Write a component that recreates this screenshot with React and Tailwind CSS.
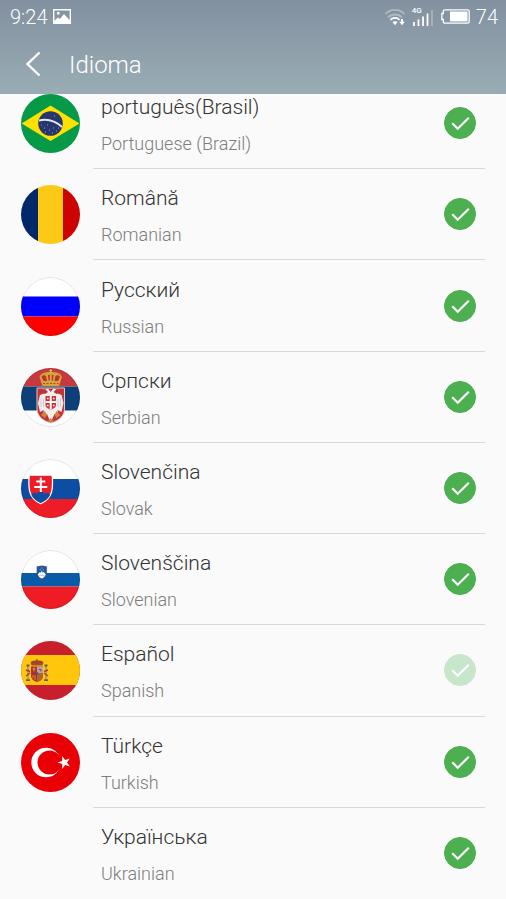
import { useState } from 'react'

const LANGUAGES = [
  { id: 'pt-BR', name: 'português(Brasil)', english: 'Portuguese (Brazil)', Flag: BrazilFlag },
  { id: 'ro', name: 'Română', english: 'Romanian', Flag: RomaniaFlag },
  { id: 'ru', name: 'Русский', english: 'Russian', Flag: RussiaFlag },
  { id: 'sr', name: 'Српски', english: 'Serbian', Flag: SerbiaFlag },
  { id: 'sk', name: 'Slovenčina', english: 'Slovak', Flag: SlovakiaFlag },
  { id: 'sl', name: 'Slovenščina', english: 'Slovenian', Flag: SloveniaFlag },
  { id: 'es', name: 'Español', english: 'Spanish', Flag: SpainFlag, locked: true },
  { id: 'tr', name: 'Türkçe', english: 'Turkish', Flag: TurkeyFlag },
  { id: 'uk', name: 'Українська', english: 'Ukrainian' },
]

function Roundel({ outlined, children }) {
  return (
    <svg viewBox="0 0 59 59" className="size-full rounded-full" aria-hidden="true">
      {children}
      {outlined && <circle cx="29.5" cy="29.5" r="29" fill="none" stroke="#000" strokeOpacity="0.12" />}
    </svg>
  )
}

function BrazilFlag() {
  return (
    <Roundel>
      <rect width="59" height="59" fill="#069a48" />
      <path d="M.7 29.5 29.5 11.5 58.5 29.5 29.5 47Z" fill="#fee100" />
      <circle cx="29.5" cy="29.5" r="12.3" fill="#28366f" />
      <path d="M18 26.4Q31 23.5 41 33" fill="none" stroke="#dcebea" strokeWidth="2" />
      <path d="M20 31h1M23 34h1M26 31h1M28 36h1M32 34h1M35 37h1M24 38h1M31 39h1M37 34h1M33 22h1" stroke="#8e9bc4" strokeWidth="1" />
    </Roundel>
  )
}

function RomaniaFlag() {
  return (
    <Roundel>
      <rect width="17" height="59" fill="#00286b" />
      <rect x="17" width="25" height="59" fill="#fcca16" />
      <rect x="42" width="17" height="59" fill="#cd0303" />
    </Roundel>
  )
}

function RussiaFlag() {
  return (
    <Roundel outlined>
      <rect width="59" height="20" fill="#fff" />
      <rect y="19.5" width="59" height="20" fill="#00f" />
      <rect y="39.5" width="59" height="20" fill="#f00" />
    </Roundel>
  )
}

function SerbiaFlag() {
  return (
    <Roundel outlined>
      <rect width="59" height="59" fill="#fff" />
      <rect width="59" height="18.5" fill="#c6393e" />
      <rect y="18.5" width="59" height="24" fill="#0c4076" />
      {/* shield */}
      <path d="M16 20h27.500v21c0 7-6 12-13.700 14C22 53 16 48 16 41Z" fill="#c5323a" stroke="#e5c8c8" strokeWidth="1" />
      {/* eagle */}
      <path d="M29.700 24 27 20.500l-5 1.500 2 3-5 2-2 8 2 9 4-2-1 5 4-1 3 7h1.500l3-7 4 1-1-5 4 2 2-9-2-8-5-2 2-3-5-1.500Z" fill="#f3eeee" />
      <path d="M20 24l4-3 3 3-3 2ZM39.500 24l-4-3-3 3 3 2Z" fill="#b8362d" />
      <path d="M20 30v9M22.500 31v8M37 31v8M39.500 30v9" stroke="#cbbfc4" strokeWidth="0.800" />
      <path d="M24.500 28h10.500v9c0 2-2 3.500-5.200 4.500-3.300-1-5.300-2.500-5.300-4.500Z" fill="#cf3239" />
      <path d="M29.700 28v13M24.500 34h10.500" stroke="#fff" strokeWidth="2" />
      <path d="M26 30.500h1.500M32 30.500h1.500M26 37.500h1.500M32 37.500h1.500" stroke="#fff" strokeWidth="1.500" />
      <path d="M20 47l4-4 2 4-2 3ZM39.500 47l-4-4-2 4 2 3ZM27 53l2.700-3 2.700 3-2.700 1.500Z" fill="#c98a3c" />
      {/* crown */}
      <path d="M21.500 18 18.500 9c1-4 6-5 11.200-5s10.200 1 11.200 5L38 18Z" fill="#d8a23a" />
      <path d="M22.500 13 20.500 9c1-2 3-2 4.500-1l1 5ZM27.500 12.500 27 7h1.800v5.500ZM30.800 12.500V7h1.800l-.6 5.500ZM33.500 13l1-5c1.500-1 3.500-1 4.500 1l-2 4Z" fill="#b5362f" />
      <path d="M22 15.500h15.500" stroke="#a7482e" strokeWidth="1.200" strokeDasharray="2 1.500" />
      <path d="M29.700 1v4M28.200 2.500h3" stroke="#e6bd5a" strokeWidth="1.200" />
    </Roundel>
  )
}

function SlovakiaFlag() {
  return (
    <Roundel outlined>
      <rect width="59" height="20" fill="#fff" />
      <rect y="20" width="59" height="20" fill="#0d4da2" />
      <rect y="40" width="59" height="19" fill="#ed1c27" />
      <path d="M8.200 16.200h23c.6 7 .6 12-.7 17-1.600 5.800-5.500 9.300-10.800 11.500-5.300-2.200-9.200-5.700-10.800-11.500-1.300-5-1.300-10-.7-17Z" fill="#ed1c27" stroke="#fff" strokeWidth="1.300" />
      <path d="M10.500 36c1-2.500 4-3 5.200-1 .8-3.500 7.200-3.500 8 0 1.300-2 4.300-1.500 5.300 1-2 4-5 6.300-9.300 8-4.200-1.700-7.200-4-9.200-8Z" fill="#0d4da2" />
      <path d="M19.800 18.500v14.500M15.300 22.500h9M13.300 28h13" stroke="#fff" strokeWidth="2" />
    </Roundel>
  )
}

function SloveniaFlag() {
  return (
    <Roundel outlined>
      <rect width="59" height="23" fill="#fff" />
      <rect y="23" width="59" height="13.500" fill="#095ba8" />
      <rect y="36.500" width="59" height="23" fill="#ee1c25" />
      <path d="M15.800 16.500q5-1.600 10 0v6c0 3.500-2 5.600-5 7-3-1.400-5-3.500-5-7Z" fill="#1a5a9e" stroke="#c5404c" strokeWidth="0.300" />
      <path d="M16.800 24.500l2-2.500 1 .8 1-2.300 1 2.300 1-.8 2 2.500c-.8 2-2 3-4 4-2-1-3.200-2-4-4Z" fill="#fff" />
      <path d="M18.300 25.500q1.200-.8 2.500 0t2.500 0" fill="none" stroke="#1a5a9e" strokeWidth="0.400" />
      <path d="M20.300 18h1M18.800 19.800h1M21.800 19.800h1" stroke="#e7d264" strokeWidth="0.800" />
    </Roundel>
  )
}

function SpainFlag() {
  return (
    <Roundel>
      <rect width="59" height="59" fill="#c7202c" />
      <rect y="14" width="59" height="30" fill="#ffc60b" />
      {/* pillars */}
      <path d="M7 25v13M25 25v13" stroke="#a99a7a" strokeWidth="1.800" />
      <path d="M5.500 24.500h3M23.500 24.500h3M5 39.200h4M23 39.200h4" stroke="#755b43" strokeWidth="1.800" />
      <path d="M5 29l4 1.500M5 35l4-3M23 30.500l4-1.500M23 32l4 3" stroke="#b33a2b" strokeWidth="1.500" />
      {/* crown */}
      <path d="M10.500 24.500 9.500 21.500c1-2 4-2 6.500-2s5.500 0 6.500 2l-1 3Z" fill="#a8482f" />
      <path d="M16 18v5M12 21.500h1.500M18.500 21.500H20" stroke="#704035" strokeWidth="1" />
      {/* shield */}
      <path d="M10 25.500h12v9c0 3.500-2.500 5.500-6 6.500-3.500-1-6-3-6-6.500Z" fill="#ae3029" />
      <path d="M16 25.500h6v7h-6Z" fill="#b8a1af" />
      <path d="M16 32.500h6v2.500c0 3-2.500 5-6 6Z" fill="#b06428" />
      <path d="M11.500 28h3M13 26.500v4" stroke="#d89b43" strokeWidth="1" />
      <path d="M18 28.500h2v2" fill="none" stroke="#873b60" strokeWidth="1" />
      <path d="M12 34v3.500M14 34v5" stroke="#d89b43" strokeWidth="0.800" />
      <circle cx="16" cy="32.500" r="1.500" fill="#5a4a77" />
    </Roundel>
  )
}

function TurkeyFlag() {
  return (
    <Roundel>
      <rect width="59" height="59" fill="#e80006" />
      <circle cx="25" cy="29.500" r="14.700" fill="#fff" />
      <circle cx="28.500" cy="29.500" r="12" fill="#e80006" />
      <path d="M36.500 29.500 41.200 28 41.200 23 44.100 27 48.900 25.500 46 29.500 48.900 33.500 44.100 32 41.200 36 41.200 31Z" fill="#fff" />
    </Roundel>
  )
}

function StatusBar() {
  return (
    <div className="flex h-[33px] items-center justify-between pr-2 pl-2.5 text-xl leading-8">
      <div className="flex items-center gap-1.5">
        <time>9:24</time>
        <svg viewBox="0 0 18 15" className="h-[15px] w-[18px]" aria-label="Screenshot saved">
          <path d="M.7.7h16.600v13.600H.7Z" fill="none" stroke="#fff" strokeWidth="1.400" />
          <path d="M1 14v-2l4-3.500 2 1.500 4-5 6 6.500V14Z" fill="#fff" />
          <rect x="4" y="3" width="2.500" height="2.500" fill="#fff" />
        </svg>
      </div>
      <div className="flex items-center gap-2">
        <div className="flex items-center gap-1.5">
          <svg viewBox="0 0 22 18" className="h-[18px] w-[22px]" fill="none" aria-label="Wi-Fi">
            <path d="M1.500 6C6.500.5 15.500.5 20.500 6M4 9.500c3.500-4 10.500-4 14 0" stroke="#fff" strokeOpacity="0.350" strokeWidth="1.800" />
            <path d="M6.500 12c2-2.800 7-2.800 9 0" stroke="#fff" strokeWidth="1.800" />
            <path d="M8.500 14q2.500-1.500 5 0L11 17.300Z" fill="#fff" />
            <path d="M18 11v3.500" stroke="#fff" strokeWidth="2" />
            <path d="M15.200 13.700h5.600L18 17.300Z" fill="#fff" />
          </svg>
          <div className="flex h-[18px] w-[21px] flex-col">
            <span className="h-1.5 text-[8px] leading-[6px] font-medium">4G</span>
            <svg viewBox="0 0 21 16" className="-mt-1 h-4 w-[21px]" aria-label="Signal">
              <path d="M2 12v4M6.500 9.500V16M11 6.500V16M15.500 3.500V16" stroke="#fff" strokeWidth="1.800" />
              <path d="M20 0v16" stroke="#fff" strokeOpacity="0.350" strokeWidth="1.500" />
            </svg>
          </div>
        </div>
        <div className="flex items-center gap-1.5">
          <svg viewBox="0 0 29 15" className="h-[15px] w-[29px]" aria-label="Battery">
            <path d="M4 .8h22.500q1.700 0 1.700 1.700v10q0 1.700-1.700 1.700H4q-1.700 0-1.700-1.700V10.500H.8v-6h1.500v-2Q2.300.8 4 .8Z" fill="none" stroke="#fff" strokeWidth="1.300" />
            <rect x="9" y="2.500" width="17.500" height="10" fill="#fff" />
          </svg>
          <span>74</span>
        </div>
      </div>
    </div>
  )
}

function LanguageRow({ language, checked, onToggle }) {
  const { id, name, english, Flag, locked } = language

  return (
    <li className="group flex min-h-[91px]">
      <label htmlFor={id} className="flex flex-1 items-stretch px-[21px]">
        <span className="flex w-[72px] shrink-0 items-center">
          <span className="size-[59px]">{Flag && <Flag />}</span>
        </span>
        <span className="flex flex-1 items-center justify-between border-b border-[#d9d9d9] pr-[9px] pl-2 group-last:border-transparent">
          <span className="flex flex-col gap-[9px] pt-[5px]">
            <span className="text-[21px] leading-7 text-[#333]">{name}</span>
            <span className="text-lg leading-7 text-[#7d7d7d]">{english}</span>
          </span>
          <span className="grid size-8 place-items-center">
            <input
              id={id}
              type="checkbox"
              checked={checked}
              disabled={locked}
              onChange={onToggle}
              className="col-start-1 row-start-1 size-8 appearance-none rounded-full border border-[#4caf50] checked:bg-[#4caf50] disabled:border-[#c8e6c9] disabled:bg-[#c8e6c9]"
            />
            {checked && (
              <svg viewBox="0 0 32 32" className="pointer-events-none col-start-1 row-start-1 size-8" aria-hidden="true">
                <path d="M8.300 16.300l5.400 5.400L24.800 10.800" fill="none" stroke="#fff" strokeWidth="2.200" />
              </svg>
            )}
          </span>
        </span>
      </label>
    </li>
  )
}

function App() {
  const [selected, setSelected] = useState(LANGUAGES.map((l) => l.id))

  const toggle = (id) => {
    setSelected((ids) => (ids.includes(id) ? ids.filter((i) => i !== id) : [...ids, id]))
  }

  return (
    <div className="flex min-h-screen flex-col bg-[#fafafa] font-['Roboto','Noto_Sans',sans-serif] font-light">
      <header className="z-10 bg-gradient-to-b from-[#8290a0] to-[#9aadb4] text-white">
        <StatusBar />
        <div className="flex h-[61px] items-center gap-6 pl-[21px]">
          <button type="button" aria-label="Volver" className="h-9 w-6">
            <svg viewBox="0 0 24 36" className="h-9 w-6" fill="none">
              <path d="M18.500 6.500 6.500 18l12 11.500" stroke="#fff" strokeWidth="2.400" />
            </svg>
          </button>
          <h1 className="pt-0.5 text-2xl leading-8">Idioma</h1>
        </div>
      </header>

      {/* the list is scrolled a little way under the header */}
      <main className="-mt-4 flex flex-1 flex-col">
        <ul className="grid flex-1 auto-rows-fr">
          {LANGUAGES.map((language) => (
            <LanguageRow
              key={language.id}
              language={language}
              checked={selected.includes(language.id)}
              onToggle={() => toggle(language.id)}
            />
          ))}
        </ul>
      </main>
    </div>
  )
}

export default App
